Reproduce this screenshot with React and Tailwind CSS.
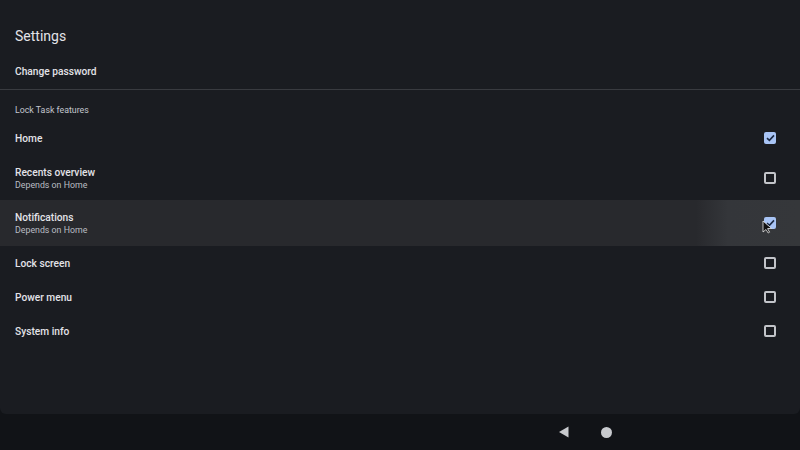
import React from "react";

function Box({ checked }) {
  if (checked) {
    return (
      <div className="w-[12px] h-[12px] rounded-[2px] bg-[#a8c4f5] flex items-center justify-center">
        <svg width="9" height="8" viewBox="0 0 9 8">
          <path d="M1 4.2 L3.4 6.4 L8 1.4" stroke="#1c2a44" strokeWidth="1.6" fill="none" />
        </svg>
      </div>
    );
  }
  return <div className="w-[12px] h-[12px] rounded-[2px] border-2 border-[#c2c4c9]" />;
}

function Row({ title, sub, checked, highlight, cursor }) {
  return (
    <div
      className={
        "relative flex items-center justify-between pl-[15px] pr-[24px] " +
        (sub ? "h-[46px] " : "h-[34px] ") +
        (highlight ? "bg-[linear-gradient(90deg,#28292d_0%,#28292d_87%,#34363a_91%,#35373a_100%)]" : "")
      }
    >
      <div className="flex flex-col">
        <span className="text-[10.2px] leading-[13px] font-medium text-[#e3e3e8]">{title}</span>
        {sub && <span className="text-[8.8px] leading-[12px] text-[#b9bcc3]">{sub}</span>}
      </div>
      <Box checked={checked} />
      {cursor && (
        <svg className="absolute left-[762px] top-[20px]" width="11" height="14" viewBox="0 0 11 14">
          <path d="M1 1 L1 12 L4 9.5 L6.2 13 L7.6 12.2 L5.6 8.6 L9.6 8.4 Z" fill="#111" stroke="#e8e8e8" strokeWidth="0.8" />
        </svg>
      )}
    </div>
  );
}

export default function App() {
  return (
    <div
      className="w-[800px] h-[450px] bg-[#111317] flex flex-col overflow-hidden"
      style={{ fontFamily: "Roboto, 'Noto Sans', sans-serif" }}
    >
      <div className="h-[414px] bg-[#1a1c21] rounded-b-[6px] flex flex-col">
        <div className="h-[55px] flex items-center pl-[15px] pt-[17px]">
          <span className="text-[14px] text-[#e3e3e8]">Settings</span>
        </div>
        <div className="h-[34px] flex items-center pl-[15px]">
          <span className="text-[10.2px] font-medium text-[#e3e3e8]">Change password</span>
        </div>
        <div className="h-px bg-[#393b40]" />
        <div className="h-[31px] flex items-center pl-[15px] pt-[10px]">
          <span className="text-[8.8px] text-[#c3c6ce]">Lock Task features</span>
        </div>
        <Row title="Home" checked />
        <Row title="Recents overview" sub="Depends on Home" />
        <div className="-mt-px" />
        <Row title="Notifications" sub="Depends on Home" checked highlight cursor />
        <Row title="Lock screen" />
        <Row title="Power menu" />
        <Row title="System info" />
      </div>
      <div className="flex-1 flex items-center pl-[559px] gap-[32px]">
        <svg width="10" height="12" viewBox="0 0 10 12">
          <path d="M0 6 L9.5 0.5 L9.5 11.5 Z" fill="#c8cace" />
        </svg>
        <div className="w-[11px] h-[11px] rounded-full bg-[#c8cace]" />
      </div>
    </div>
  );
}
